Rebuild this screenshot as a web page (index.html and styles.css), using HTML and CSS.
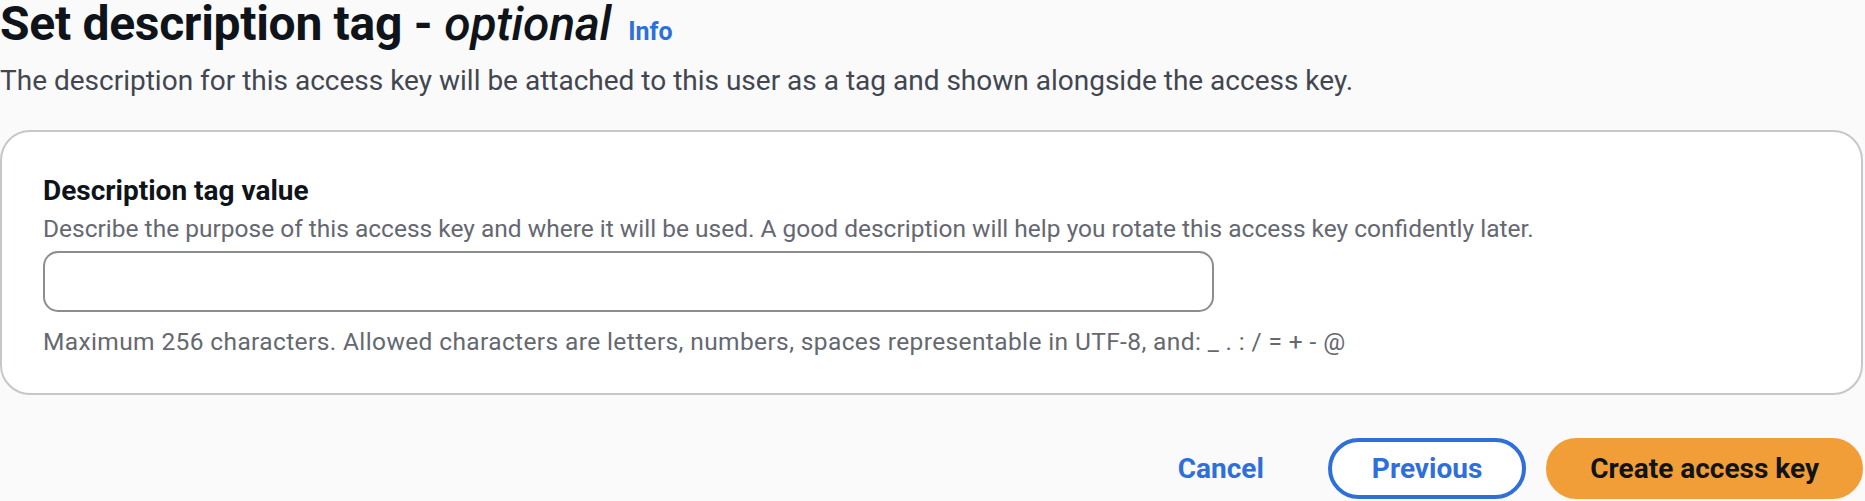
FILE: index.html
```html
<!DOCTYPE html>
<html lang="en">
<head>
<meta charset="utf-8">
<title>Set description tag</title>
<link rel="stylesheet" href="styles.css">
</head>
<body>
<main class="page">
  <header class="page-header">
    <h1 class="title">Set description tag - <i class="title-opt">optional</i><a class="info" href="#">Info</a></h1>
    <p class="subtitle">The description for this access key will be attached to this user as a tag and shown alongside the access key.</p>
  </header>
  <section class="card">
    <div class="field">
      <label class="field-label" for="desc">Description tag value</label>
      <div class="field-desc">Describe the purpose of this access key and where it will be used. A good description will help you rotate this access key confidently later.</div>
      <input id="desc" class="text-input" type="text">
      <div class="field-constraint">Maximum 256 characters. Allowed characters are letters, numbers, spaces representable in UTF-8, and: _ . : / = + - @</div>
    </div>
  </section>
  <footer class="actions">
    <button class="btn btn-link" type="button">Cancel</button>
    <button class="btn btn-normal" type="button">Previous</button>
    <button class="btn btn-primary" type="button">Create access key</button>
  </footer>
</main>
</body>
</html>
```
FILE: styles.css
```css
html, body {
  margin: 0;
  padding: 0;
  background: #fafafa;
}
body {
  font-family: Roboto, "Open Sans", sans-serif;
  color: #0f141a;
}
.page {
  display: flex;
  flex-direction: column;
  padding-right: 2px;
}
.page-header {
  display: flex;
  flex-direction: column;
}
.title {
  margin: 0;
  font-size: 48px;
  line-height: 48px;
  font-weight: 700;
  color: #0f141a;
  letter-spacing: -0.3px;
  display: flex;
  align-items: baseline;
}
.title-opt {
  font-style: italic;
  font-weight: 500;
  margin-left: 12px;
}
.info {
  margin-left: 17px;
  font-size: 25px;
  font-weight: 700;
  color: #2f6fd9;
  text-decoration: none;
  letter-spacing: 0;
}
.subtitle {
  margin: 7px 0 0;
  font-size: 28px;
  line-height: 36px;
  color: #424650;
}
.card {
  margin-top: 31px;
  background: #ffffff;
  border: 2px solid #c6c6cd;
  border-radius: 30px;
  padding: 42px 41px 36px;
}
.field {
  display: flex;
  flex-direction: column;
  align-items: flex-start;
}
.field-label {
  font-size: 28px;
  line-height: 34px;
  font-weight: 700;
  color: #0f141a;
}
.field-desc {
  margin-top: 6px;
  font-size: 24.5px;
  line-height: 30px;
  color: #656871;
}
.text-input {
  margin-top: 7px;
  width: 1171px;
  height: 61px;
  box-sizing: border-box;
  border: 2px solid #8c8c94;
  border-radius: 15px;
  background: #ffffff;
  font-family: inherit;
  font-size: 26px;
  padding: 0 20px;
}
.field-constraint {
  margin-top: 15px;
  font-size: 24.5px;
  line-height: 30px;
  letter-spacing: 0.38px;
  color: #656871;
}
.actions {
  margin-top: 43px;
  display: flex;
  justify-content: flex-end;
  align-items: center;
  gap: 20px;
}
.btn {
  height: 61px;
  box-sizing: border-box;
  border: 4px solid transparent;
  border-radius: 31px;
  padding: 0 40px;
  font-family: inherit;
  font-size: 28px;
  font-weight: 700;
  background: transparent;
  cursor: pointer;
}
.btn-link {
  color: #2f6fd9;
}
.btn-normal {
  color: #2f6fd9;
  border-color: #2f6fd9;
  background: #ffffff;
}
.btn-primary {
  color: #0f141a;
  background: #f29e38;
  border-color: #f29e38;
}
```
